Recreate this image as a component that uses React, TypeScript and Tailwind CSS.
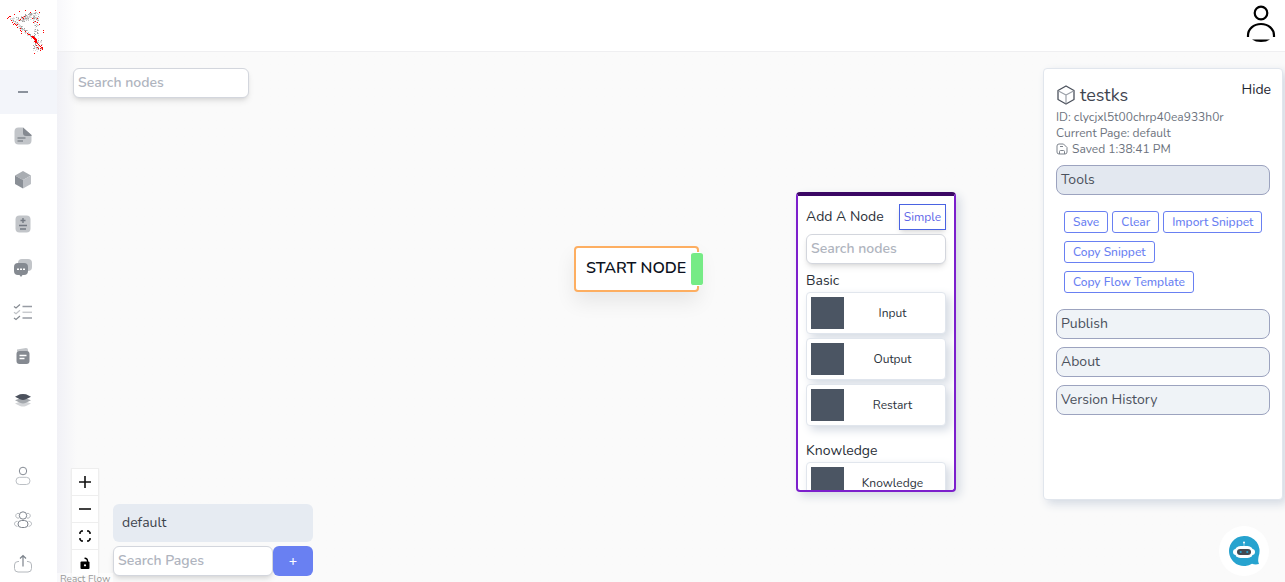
import React from "react";

type Dot = { x: number; y: number; c: string };

function scatter(): Dot[] {
  let seed = 11;
  const rnd = () => {
    seed = (seed * 16807) % 2147483647;
    return seed / 2147483647;
  };
  const greys = ["#d8d8d8", "#c4c4c4", "#a0a0a0", "#e6e6e6"];
  const dots: Dot[] = [];
  const grey = (x: number, y: number) =>
    dots.push({ x: Math.round(x), y: Math.round(y), c: greys[Math.floor(rnd() * 4)] });
  for (let i = 0; i < 130; i++) {
    const t = rnd();
    grey(10 + t * 29, 18 - t * 7 + rnd() * (3 + t * 5));
  }
  for (let i = 0; i < 90; i++) {
    const t = rnd();
    grey(20 + t * 10 + rnd() * 4, 18 - t * 7 + rnd() * 4);
  }
  for (let i = 0; i < 75; i++) grey(33 + rnd() * 5, 13 + rnd() * 25);
  for (let i = 0; i < 120; i++) {
    const t = rnd();
    grey(12 + t * 24, 20 + t * 20 + rnd() * 4 - 2);
  }
  for (let i = 0; i < 65; i++) grey(33 + rnd() * 9, 40 + rnd() * 11);
  return dots;
}

const greyDots = scatter();
const redDots: [number, number][] = [
  [9, 16], [8, 17], [7, 18], [10, 16], [14, 14], [19, 11], [25, 10], [30, 12], [35, 10], [39, 12],
  [11, 20], [12, 22], [13, 24], [14, 23], [15, 24], [16, 25], [17, 24], [17, 27], [20, 28], [20, 30],
  [21, 31], [21, 33], [25, 31], [27, 33], [28, 34], [29, 34], [31, 36], [32, 36], [32, 37], [33, 36],
  [33, 37], [33, 38], [34, 37], [34, 38], [34, 39], [35, 38], [35, 39], [35, 40], [35, 41], [36, 39],
  [36, 40], [36, 41], [36, 42], [35, 42], [37, 43], [38, 44], [39, 45], [40, 46], [41, 47], [42, 49],
  [40, 48], [40, 50], [42, 47], [38, 48], [34, 53], [43, 30], [43, 32], [37, 18], [35, 21], [37, 22],
  [39, 24], [33, 22], [32, 18], [23, 18], [22, 17], [20, 19], [19, 20], [24, 16], [36, 45], [37, 47],
  [41, 45], [42, 48], [34, 41],
];

function Logo() {
  return (
    <svg width="48" height="56" viewBox="0 0 48 56" shapeRendering="crispEdges" aria-hidden="true">
      {greyDots.map((d, i) => (
        <rect key={i} x={d.x} y={d.y} width="1" height="1" fill={d.c} />
      ))}
      {redDots.map(([x, y]) => (
        <rect key={`${x}-${y}`} x={x} y={y} width="1" height="1" fill="#ff0000" />
      ))}
    </svg>
  );
}

function Glyph({ children }: { children: React.ReactNode }) {
  return (
    <svg width="20" height="20" viewBox="0 0 20 20" fill="none" aria-hidden="true">
      {children}
    </svg>
  );
}

const navItems: { label: string; icon: React.ReactNode }[] = [
  { label: "Overview", icon: <path d="M5 10h10" stroke="#8b929c" strokeWidth="2" /> },
  {
    label: "Documents",
    icon: (
      <>
        <path d="M5.500 1.500H10L18.500 9v5.500a4 4 0 0 1-4 4h-9a4 4 0 0 1-4-4v-9a4 4 0 0 1 4-4z" fill="#c2c5c9" />
        <path d="M10 1.500L18.500 9v1H13a3 3 0 0 1-3-3z" fill="#858a91" />
        <path d="M4.500 12h8M4.500 15h5.500" stroke="#858a91" strokeWidth="1.300" />
      </>
    ),
  },
  {
    label: "Models",
    icon: (
      <>
        <path d="M10 1l8 4.500-8 4.500-8-4.500z" fill="#a9adb2" />
        <path d="M18 5.500V14l-8 4.500V10z" fill="#bcbfc4" />
        <path d="M2 5.500l8 4.500v8.500L2 14z" fill="#8a8f96" />
      </>
    ),
  },
  {
    label: "Variables",
    icon: (
      <>
        <rect x="2.500" y="1.500" width="15" height="17" rx="4" fill="#c2c5c9" />
        <path d="M10 4v5M7.500 6.500h5M6 11.500h8M7 15h6" stroke="#737982" strokeWidth="1.400" />
      </>
    ),
  },
  {
    label: "Chats",
    icon: (
      <>
        <rect x="5" y="1" width="14" height="12" rx="4" fill="#c2c5c9" />
        <path d="M5 5h6a4 4 0 0 1 4 4v4a4 4 0 0 1-4 4h-1.500L8 19l-1.500-2H5a4 4 0 0 1-4-4V9a4 4 0 0 1 4-4z" fill="#858a91" />
        <path d="M4 11.300h2M7 11.300h2M10 11.300h2" stroke="#fff" strokeWidth="1.500" />
      </>
    ),
  },
  {
    label: "Tasks",
    icon: (
      <>
        <path d="M1 4.500l2 1.500 4-3.500M1 16l2 1.500L7 14" stroke="#858a91" strokeWidth="1.200" />
        <path d="M1 10.300l2 1.500 4-3.500" stroke="#bfc2c6" strokeWidth="1.200" />
        <path d="M9.500 4.500H19M9.500 16H19" stroke="#989ca4" strokeWidth="1.500" />
        <path d="M9.500 10.300H19" stroke="#c9cbcf" strokeWidth="1.500" />
      </>
    ),
  },
  {
    label: "Pages",
    icon: (
      <>
        <path d="M4 5.500V3.500L13 2a2 2 0 0 1 2 2v2z" fill="#c2c5c9" />
        <rect x="3.500" y="5" width="13" height="13" rx="3" fill="#858a91" />
        <path d="M6.500 9.500h7M6.500 12.500h5" stroke="#fff" strokeWidth="1.300" />
      </>
    ),
  },
  {
    label: "Layers",
    icon: (
      <>
        <path d="M2 13.500l8-3 8 3-5 2.500q-3 1.200-6 0z" fill="#d3d5d8" />
        <path d="M2 10.200l8-3 8 3-5 2.600q-3 1.200-6 0z" fill="#a4a8ad" />
        <path d="M2 6.800l5-2.500q3-.8 6 0l5 2.500-5 2.500q-3 1.200-6 0z" fill="#4b515c" />
      </>
    ),
  },
];

const accountItems: { label: string; icon: React.ReactNode }[] = [
  {
    label: "Profile",
    icon: (
      <>
        <ellipse cx="10" cy="5" rx="3.700" ry="3.800" stroke="#858b94" />
        <rect x="3" y="11.300" width="14" height="7.200" rx="3.600" stroke="#bcc0c5" />
      </>
    ),
  },
  {
    label: "Team",
    icon: (
      <>
        <path d="M6 3.500a2.400 2.400 0 1 0 0 4.500M14 3.500a2.400 2.400 0 1 1 0 4.500M4.500 11.300c-4 0-4 5 0 5M15.500 11.300c4 0 4 5 0 5" stroke="#b4b8bd" />
        <circle cx="10" cy="5.500" r="3.700" stroke="#7d838c" />
        <rect x="5" y="10.500" width="10" height="7" rx="3.500" stroke="#7d838c" />
      </>
    ),
  },
  {
    label: "Share",
    icon: (
      <>
        <path d="M6 7.500H5a3.500 3.500 0 0 0-3.500 3.500v3.500A3.500 3.500 0 0 0 5 18h10a3.500 3.500 0 0 0 3.500-3.500V11A3.500 3.500 0 0 0 15 7.500h-1" stroke="#b4b8bd" />
        <path d="M10 12.500V2M7 4.500L10 1.500l3 3" stroke="#7d838c" strokeWidth="1.200" />
      </>
    ),
  },
];

function NavButton({ label, active, children }: { label: string; active?: boolean; children: React.ReactNode }) {
  return (
    <button
      aria-label={label}
      className={
        active
          ? "flex h-11 w-full shrink-0 items-center bg-[#f3f5fa] pl-[13px]"
          : "flex h-11 w-full shrink-0 items-center pl-[13px]"
      }
    >
      <Glyph>{children}</Glyph>
    </button>
  );
}

function Sidebar() {
  return (
    <nav className="z-10 flex w-[57px] shrink-0 flex-col overflow-hidden bg-white">
      <div className="h-[70px] shrink-0">
        <Logo />
      </div>
      {navItems.map((item, i) => (
        <NavButton key={item.label} label={item.label} active={i === 0}>
          {item.icon}
        </NavButton>
      ))}
      <div className="h-8 shrink-0" />
      {accountItems.map((item) => (
        <NavButton key={item.label} label={item.label}>
          {item.icon}
        </NavButton>
      ))}
    </nav>
  );
}

function SearchInput({ label }: { label: string }) {
  return (
    <input
      type="text"
      aria-label={label}
      placeholder={label}
      className="h-[30px] w-full min-w-0 rounded-md border border-[#d3d6dd] bg-white px-1 pb-0.5 text-sm font-semibold shadow-md outline-none placeholder:text-[#afb4be]"
    />
  );
}

const controls: { label: string; icon: React.ReactNode }[] = [
  { label: "Zoom in", icon: <path d="M6 0v12M0 6h12" stroke="#111" strokeWidth="1.600" /> },
  { label: "Zoom out", icon: <path d="M0 6h12" stroke="#111" strokeWidth="1.600" /> },
  {
    label: "Fit view",
    icon: <path d="M1 4V2.500L2.500 1H4M8 1h1.500L11 2.500V4M11 8v1.500L9.500 11H8M4 11H2.500L1 9.500V8" stroke="#000" strokeWidth="1.500" />,
  },
  {
    label: "Lock",
    icon: (
      <>
        <rect x="1.500" y="4.500" width="9" height="7.500" rx="1" fill="#000" />
        <path d="M8.500 5V3.500Q8 1 5.500 1.300" stroke="#000" strokeWidth="1.300" />
        <circle cx="6" cy="8.300" r="1.100" fill="#fff" />
      </>
    ),
  },
];

function CanvasControls() {
  return (
    <div className="flex w-7 flex-col border-x border-t border-[#eeeeee] bg-white shadow-xs">
      {controls.map((c) => (
        <button key={c.label} aria-label={c.label} className="flex h-[27px] items-center justify-center border-b border-[#eeeeee]">
          <svg width="12" height="12" viewBox="0 0 12 12" fill="none" aria-hidden="true">
            {c.icon}
          </svg>
        </button>
      ))}
    </div>
  );
}

function PagePicker() {
  return (
    <div className="flex w-[200px] flex-col gap-1 pb-1.5">
      <button className="flex h-[38px] items-center rounded-md bg-[#e6ebf2] px-[9px] text-sm text-[#3d434c]">default</button>
      <div className="flex">
        <SearchInput label="Search Pages" />
        <button aria-label="Add page" className="h-[30px] w-10 shrink-0 rounded-md bg-[#6980f2] text-sm font-semibold text-white">
          +
        </button>
      </div>
    </div>
  );
}

function StartNode() {
  return (
    <div className="absolute top-[194px] left-[517px] flex h-[46px] w-[125px] items-center rounded border-2 border-[#fdae61] bg-white pb-0.5 pl-[10px] text-base font-semibold whitespace-nowrap text-[#0c1220] shadow-[0_10px_20px_0_#00000014]">
      START NODE
      <span className="absolute top-[4px] -right-[6px] h-[34px] w-3 rounded-[3px] border-y border-white bg-[#76eb86]" />
    </div>
  );
}

function PaletteItem({ name }: { name: string }) {
  return (
    <button className="flex h-[42px] w-full shrink-0 items-center rounded border border-[#e1e6ed] bg-white p-1 text-xs text-[#2c323b] shadow-[4px_4px_10px_0_#d4dae3]">
      <span className="h-8 w-[33px] bg-[#4b5563]" />
      <span className="flex-1 text-center">{name}</span>
    </button>
  );
}

function PaletteGroup({ title, items }: { title: string; items: string[] }) {
  return (
    <section className="flex shrink-0 flex-col gap-1">
      <h2 className="-mb-1 text-sm leading-[22px] text-[#2a2f38]">{title}</h2>
      {items.map((name) => (
        <PaletteItem key={name} name={name} />
      ))}
    </section>
  );
}

function AddNodePanel() {
  return (
    <div className="absolute top-[140px] left-[739px] flex h-[300px] w-40 flex-col overflow-hidden rounded border-2 border-t-4 border-[#7c1fcc] border-t-[#3b0764] bg-white px-2 pt-2 shadow-[4px_4px_10px_0_#d4dae3]">
      <div className="flex shrink-0 items-center justify-between">
        <h1 className="text-sm whitespace-nowrap text-[#2a2f38]">Add A Node</h1>
        <button className="h-[26px] w-[47px] border border-[#4a63e2] bg-white text-xs text-[#5f67e8] shadow-md">Simple</button>
      </div>
      <div className="mt-1 mb-1.5 shrink-0">
        <SearchInput label="Search nodes" />
      </div>
      <div className="flex flex-col gap-[14px]">
        <PaletteGroup title="Basic" items={["Input", "Output", "Restart"]} />
        <PaletteGroup title="Knowledge" items={["Knowledge"]} />
      </div>
    </div>
  );
}

function ToolButton({ children }: { children: React.ReactNode }) {
  return (
    <button className="h-[22px] rounded-[3px] border border-[#6980f2] px-2 text-xs leading-5 font-medium whitespace-nowrap text-[#6980f2]">
      {children}
    </button>
  );
}

function Section({ title, open }: { title: string; open?: boolean }) {
  return (
    <button
      aria-expanded={!!open}
      className={
        open
          ? "h-[30px] w-full rounded-lg border border-[#9ca3bf] bg-[#e3e8f0] px-1 text-left text-sm text-[#4b515c]"
          : "h-[30px] w-full rounded-lg border border-[#9ca3bf] bg-[#eff3f7] px-1 text-left text-sm text-[#4b515c]"
      }
    >
      {title}
    </button>
  );
}

function FlowPanel() {
  return (
    <aside className="flex min-h-0 w-60 flex-1 flex-col rounded border border-[#e1e6ed] bg-white px-3 pt-3 shadow-[4px_4px_10px_0_#d4dae3]">
      <div className="flex h-7 justify-between">
        <h1 className="mt-0.5 flex h-6 items-center gap-1 text-lg text-[#3f4550]">
          <svg width="20" height="20" viewBox="0 0 20 20" fill="none" strokeLinejoin="round" aria-hidden="true">
            <path d="M10 1l8 4.500v9L10 19l-8-4.500v-9z" stroke="#4b515c" strokeWidth="1.300" />
            <path d="M2.500 6l7.500 4 7.500-4M10 10v8.500" stroke="#9ba0a8" strokeWidth="1.200" />
          </svg>
          testks
        </h1>
        <button className="-mr-px h-[18px] text-sm leading-[18px] text-[#1d2430]">Hide</button>
      </div>
      <div className="text-xs leading-4 text-[#6d737e]">
        <p>ID: clycjxl5t00chrp40ea933h0r</p>
        <p>Current Page: default</p>
        <p className="flex items-center gap-1">
          <svg width="12" height="12" viewBox="0 0 12 12" fill="none" aria-hidden="true">
            <path d="M3 1h4.500L11 4.500V9a2 2 0 0 1-2 2H3a2 2 0 0 1-2-2V3a2 2 0 0 1 2-2z" stroke="#7d838c" />
            <path d="M3.500 11V8.500q0-1 1-1h3q1 0 1 1V11M4 3.500h3" stroke="#7d838c" />
          </svg>
          Saved 1:38:41 PM
        </p>
      </div>
      <div className="mt-2">
        <Section title="Tools" open />
      </div>
      <div className="flex flex-col items-start gap-2 px-2 py-4">
        <div className="flex gap-1">
          <ToolButton>Save</ToolButton>
          <ToolButton>Clear</ToolButton>
          <ToolButton>Import Snippet</ToolButton>
        </div>
        <ToolButton>Copy Snippet</ToolButton>
        <ToolButton>Copy Flow Template</ToolButton>
      </div>
      <div className="flex flex-col gap-2">
        <Section title="Publish" />
        <Section title="About" />
        <Section title="Version History" />
      </div>
    </aside>
  );
}

function ChatButton() {
  return (
    <button aria-label="Open chat" className="mr-[14px] flex size-[50px] shrink-0 items-center justify-center self-end rounded-full bg-white">
      <svg width="32" height="32" viewBox="0 0 32 32" fill="none" aria-hidden="true">
        <path d="M16 1a15 15 0 1 0 8 27.700q3 1.200 7 .3-1.500-2.500-.3-8A15 15 0 0 0 16 1z" fill="#27a3cf" />
        <path d="M16 8v3" stroke="#8fd0e6" />
        <circle cx="16" cy="7.500" r="1" fill="#fff" />
        <rect x="5" y="14" width="22" height="6" rx="3" fill="#fff" />
        <rect x="6.500" y="11" width="19" height="12" rx="6" fill="#fff" />
        <rect x="9" y="14" width="14" height="6" rx="3" fill="#444950" />
        <circle cx="12.700" cy="17" r="1.100" fill="#27a3cf" />
        <circle cx="19.300" cy="17" r="1.100" fill="#27a3cf" />
      </svg>
    </button>
  );
}

export default function App() {
  return (
    <div className="flex h-screen overflow-hidden bg-[#fafafa] font-['Nunito','Open_Sans',sans-serif]">
      <Sidebar />
      <div className="flex min-w-0 flex-1 flex-col">
        <header className="flex h-13 shrink-0 justify-end border-b border-[#efeff1] bg-white bg-linear-to-r from-[#f8f8fb] to-white to-[20px] pt-1 pr-2">
          <button aria-label="Account" className="h-10 w-8">
            <svg width="32" height="40" viewBox="0 0 32 40" fill="none" aria-hidden="true">
              <circle cx="16" cy="9" r="6.300" stroke="#000" strokeWidth="2.200" />
              <path d="M3 33v-1.500C3 25 8.500 20 16 20s13 5 13 11.500V33" stroke="#000" strokeWidth="2.200" />
              <path d="M7 35.500h18q-3.500 2.500-9 2.500t-9-2.500z" fill="#000" />
            </svg>
          </button>
        </header>
        <main className="relative flex min-h-0 flex-1 justify-between bg-linear-to-r from-[#f1f1f6] to-[#fafafa] to-[20px]">
          <div className="flex flex-col justify-between pt-4">
            <div className="ml-4 w-44">
              <SearchInput label="Search nodes" />
            </div>
            <div className="flex items-end gap-[14px] pl-[14px]">
              <div className="pb-[5px]">
                <CanvasControls />
              </div>
              <PagePicker />
            </div>
          </div>
          <a href="#react-flow" className="absolute -bottom-[3px] left-0 bg-white/50 px-[3px] text-[10px] leading-3 text-[#999999]">
            React Flow
          </a>
          <StartNode />
          <AddNodePanel />
          <div className="flex flex-col gap-[26px] pt-4 pr-0.5 pb-1.5">
            <FlowPanel />
            <ChatButton />
          </div>
        </main>
      </div>
    </div>
  );
}
